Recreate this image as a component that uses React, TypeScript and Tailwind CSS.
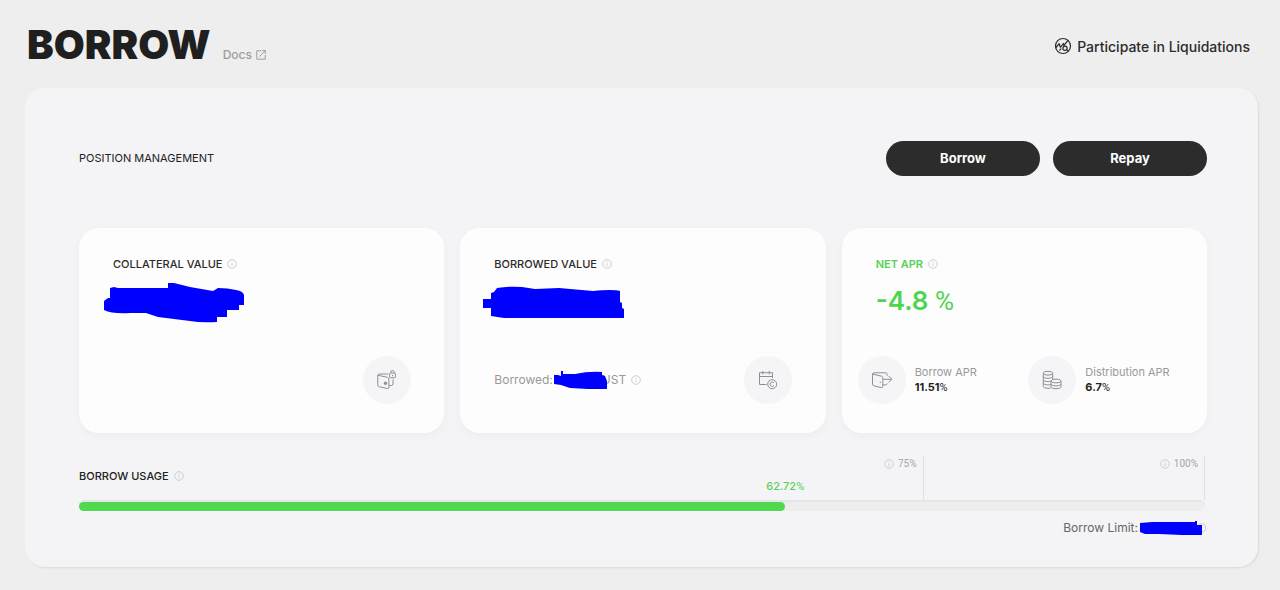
import type { ReactNode } from 'react';

const InfoIcon = ({ className = 'text-[#c9c9cb]' }: { className?: string }) => (
  <svg viewBox="0 0 10 10" className={`h-[10px] w-[10px] shrink-0 ${className}`} fill="none" stroke="currentColor" aria-hidden="true">
    <circle cx="5" cy="5" r="4.3" strokeWidth="0.9" />
    <path d="M5 4.4v3M5 2.6v0.9" strokeWidth="0.9" />
  </svg>
);

const ExternalIcon = () => (
  <svg viewBox="0 0 10 10" className="h-[10px] w-[10px]" fill="none" stroke="currentColor" aria-hidden="true">
    <path d="M5 .8H.8v8.4h8.4V5M6 .7h3.3V4M9.2 .8L3.4 6.6" />
  </svg>
);

const LiquidationIcon = () => (
  <svg viewBox="0 0 18 18" className="h-[18px] w-[18px]" fill="none" stroke="currentColor" strokeWidth="1.2" strokeLinecap="round" strokeLinejoin="round" aria-hidden="true">
    <circle cx="9" cy="9" r="7.5" />
    <path d="M2 10.5l3.2-3.8 1.2 3.6 3-3.8.4 2L14 3.4" />
    <circle cx="11" cy="11.2" r="2.1" />
    <path d="M12.6 12.6l1.6 1.3M5.8 13l1.2-1.2" />
  </svg>
);

const WalletLockIcon = () => (
  <svg viewBox="0 0 20 20" className="h-5 w-5" fill="none" stroke="currentColor" strokeLinejoin="round" aria-hidden="true">
    <path d="M.8 5.2l9.8 2.2q1.3.4 1.3 1.7v8q0 1.7-1.6 1.4l-7.9-1.7q-1.6-.4-1.6-1.9zM.8 5.2q.3-1.2 1.5-1.2h9" />
    <circle cx="8.5" cy="13.3" r="1.3" fill="currentColor" />
    <path d="M12 15.6h2.3q1.7 0 1.7-1.6V9.5" />
    <rect x="12.7" y="3" width="5.6" height="4.8" rx="0.6" />
    <path d="M13.9 3V1.8q0-1.3 1.6-1.3T17.1 1.8V3M15.5 4.8v1.4" />
  </svg>
);

const CalendarCoinIcon = () => (
  <svg viewBox="0 0 20 20" className="h-5 w-5" fill="none" stroke="currentColor" aria-hidden="true">
    <path d="M8.5 14.5H1.5V2.7h13V8M1.5 6.5h13M4.8 1v3.4M11.2 1v3.4" />
    <circle cx="14.2" cy="14.2" r="4.5" />
    <path d="M16 12.8a2.2 2.2 0 1 0 0 2.8" />
  </svg>
);

const WalletOutIcon = () => (
  <svg viewBox="0 0 22 20" className="h-5 w-[22px]" fill="none" stroke="currentColor" strokeLinejoin="round" aria-hidden="true">
    <path d="M1.5 4l9 2.2q1.3.4 1.3 1.6v8.4q0 1.7-1.6 1.4l-7.1-1.7q-1.6-.4-1.6-1.9zM1.5 4q.2-1.2 1.6-1.2h11.4q1.6 0 1.6 1.7v1.3" />
    <path d="M11.8 14.9h2.8q1.5 0 1.5-1.5M9.3 11.6v1.4M12 9.3h8.6M17.7 6.1l3.2 3.2-3.2 3.2" />
  </svg>
);

const CoinsIcon = () => (
  <svg viewBox="0 0 20 20" className="h-5 w-5" fill="none" stroke="currentColor" aria-hidden="true">
    <ellipse cx="6" cy="3.2" rx="4.7" ry="1.9" />
    <path d="M1.3 3.2v13.2c0 1.1 2.1 1.9 4.7 1.9 1 0 2-.1 2.8-.4M10.7 3.2v6.3M1.3 6.4c0 1.1 2.1 1.9 4.7 1.9s4.7-.8 4.7-1.9M1.3 9.7c0 1.1 2.1 1.9 4.7 1.9 1.2 0 2.3-.2 3-.5M1.3 13c0 1.1 2.1 1.9 4.7 1.9 1 0 2-.1 2.8-.3" />
    <ellipse cx="14" cy="11" rx="5" ry="1.9" />
    <path d="M9 11v5.8c0 1.1 2.2 1.9 5 1.9s5-.8 5-1.9V11M9 14c0 1.1 2.2 1.9 5 1.9s5-.8 5-1.9" />
  </svg>
);

const IconCircle = ({ children }: { children: ReactNode }) => (
  <div className="flex h-12 w-12 shrink-0 items-center justify-center rounded-full bg-[#f5f5f7] text-[#8f8f91]">
    {children}
  </div>
);

const CardTitle = ({ children, className = 'font-medium text-[#2b2b2b]' }: { children: ReactNode; className?: string }) => (
  <h3 className={`flex items-center gap-[5px] text-[11px] leading-4 ${className}`}>
    {children}
    <InfoIcon />
  </h3>
);

const Percent = () => <span className="font-['Roboto',sans-serif] font-normal">%</span>;

const AprItem = ({ icon, label, value }: { icon: ReactNode; label: string; value: string }) => (
  <div className="flex items-center gap-[9px]">
    <IconCircle>{icon}</IconCircle>
    <dl className="text-[11px] leading-[15px] whitespace-nowrap">
      <dt className="text-[#999]">{label}</dt>
      <dd className="font-bold text-[#222]">{value}<Percent /></dd>
    </dl>
  </div>
);

const usage = 62.72;

const cardClass = 'flex h-[205px] flex-col justify-between rounded-[20px] bg-[#fdfdfd] pt-7 pb-[29px] shadow-[0_3px_8px_rgba(0,0,0,0.03)]';
const pillClass = 'h-[35px] w-[154px] rounded-full bg-[#2c2c2c] text-[13px] font-bold text-white';

export default function App() {
  return (
    <main className="min-h-screen bg-[#eeeeee] pr-[22px] pb-5 pl-[25px] font-['Inter',sans-serif] text-[#222]">
      <header className="flex h-[88px] items-center justify-between pr-2 pl-[2px]">
        <div className="flex items-baseline gap-3">
          <h1 className="pt-[2px] text-[40px] leading-[90px] font-black text-[#1f1f1f]">BORROW</h1>
          <a href="#docs" className="flex items-center gap-1 text-[12px] font-medium text-[#9d9d9d]">
            Docs <ExternalIcon />
          </a>
        </div>
        <a href="#liquidations" className="flex items-center gap-[5px] pt-1 text-[14px] font-medium text-[#2b2b2b]">
          <LiquidationIcon />
          Participate in Liquidations
        </a>
      </header>

      <section className="rounded-[20px] bg-[#f4f4f6] pt-[53px] pr-[51px] pb-[30px] pl-[54px] shadow-[1px_1px_2px_rgba(0,0,0,0.08)]">
        <div className="flex items-center justify-between">
          <h2 className="text-[11px]">POSITION MANAGEMENT</h2>
          <div className="flex gap-[13px]">
            <button type="button" className={pillClass}>Borrow</button>
            <button type="button" className={pillClass}>Repay</button>
          </div>
        </div>

        <div className="mt-[52px] grid grid-cols-3 gap-4">
          <article className={cardClass}>
            <div>
              <div className="pl-[34px]"><CardTitle>COLLATERAL VALUE</CardTitle></div>
              <svg viewBox="103 282 142 42" className="mt-[10px] ml-6 h-[42px] w-[142px] fill-[#0000fe]" role="img" aria-label="Hidden amount">
                <path d="M110 288L114 287L118 288H168V283H174L190 287L213 291L218 288Q228 288 236 290Q243 291 244 295V305H239V310H227V317H217V322Q201 323 190 321L158 317L146 313H130Q112 314 104 310V301L108 298H110Z" />
              </svg>
            </div>
            <div className="flex justify-end pr-[33px]"><IconCircle><WalletLockIcon /></IconCircle></div>
          </article>

          <article className={cardClass}>
            <div>
              <div className="pl-[34px]"><CardTitle>BORROWED VALUE</CardTitle></div>
              <svg viewBox="483 285 142 34" className="mt-[13px] ml-[23px] h-[34px] w-[142px] fill-[#0000fe]" role="img" aria-label="Hidden amount">
                <path d="M497 288q12-2 25-1l13 2 24-1 34 3q20-2 27 0v11l2 1v5l2 1v9h-40l-80 0-13-2v-8h-9v-9h9v-6l3-1z" />
              </svg>
            </div>
            <div className="flex items-center justify-between pr-[34px] pl-[34px]">
              <p className="flex items-center text-[12px] text-[#999]">
                <span>Borrowed:</span>
                <svg viewBox="553 369 54 20" className="relative -mr-[5px] h-5 w-[54px] fill-[#0000fe]" role="img" aria-label="Hidden amount">
                  <path d="M554 374l4 0 3 1v-5h2v3l12 0q14-3 27-2v3l3 1 2 5v8l-19 0-18-1-9-3-7-1z" />
                </svg>
                <span>UST</span>
                <span className="ml-[5px]"><InfoIcon /></span>
              </p>
              <IconCircle><CalendarCoinIcon /></IconCircle>
            </div>
          </article>

          <article className={cardClass}>
            <div className="pl-[34px]">
              <CardTitle className="font-semibold text-[#57d157]">NET APR</CardTitle>
              <p className="mt-[11px] text-[26px] leading-9 font-semibold text-[#4fd44f]">-4.8 <Percent /></p>
            </div>
            <div className="grid grid-cols-2 gap-2 px-4">
              <AprItem icon={<WalletOutIcon />} label="Borrow APR" value="11.51" />
              <AprItem icon={<CoinsIcon />} label="Distribution APR" value="6.7" />
            </div>
          </article>
        </div>

        <div className="relative mt-[23px] mr-[2px]">
          <div className="flex h-11 text-[11px] text-[#a5a5a7]">
            <div className="flex w-3/4 items-start justify-between border-r border-[#e0e0e2] pr-[6px]">
              <h2 className="flex items-center gap-[5px] pt-3 leading-4 font-medium text-[#222]">
                BORROW USAGE <InfoIcon />
              </h2>
              <span className="flex items-center gap-1 font-['Roboto',sans-serif] text-[10px] leading-4"><InfoIcon />75%</span>
            </div>
            <div className="flex w-1/4 items-start justify-end border-r border-[#e0e0e2] pr-[6px]">
              <span className="flex items-center gap-1 font-['Roboto',sans-serif] text-[10px] leading-4"><InfoIcon />100%</span>
            </div>
          </div>
          <span className="absolute top-[22px] -translate-x-1/2 text-[11px] leading-4 font-medium text-[#57d157]" style={{ left: `${usage}%` }}>
            {usage}<Percent />
          </span>
          <div className="h-[11px] rounded-full border-t-2 border-[#e6e6e8] bg-[#eeeeee]">
            <div className="h-[9px] rounded-full bg-[#50d950]" style={{ width: `${usage}%` }} />
          </div>
        </div>

        <p className="mt-2 flex items-center justify-end text-[12px] leading-[18px] text-[#666]">
          <span>Borrow Limit:</span>
          <svg viewBox="1139 520 68 16" className="ml-[1px] h-4 w-[68px]" role="img" aria-label="Hidden amount">
            <circle cx="1201.5" cy="528" r="4.3" fill="none" stroke="#c9c9cb" />
            <path fill="#0000fe" d="M1140 523l12-1 43 0v-1h2v4h5v10l-20 0-23-1-14 0-5-2z" />
          </svg>
        </p>
      </section>
    </main>
  );
}
